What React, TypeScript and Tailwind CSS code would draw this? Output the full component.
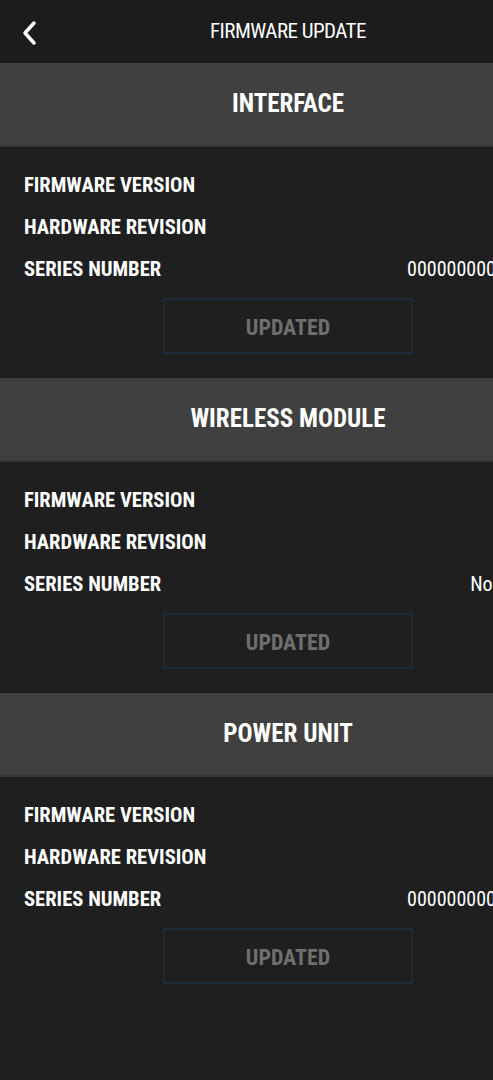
import React from 'react';

type Section = { title: string; serial: string };

const sections: Section[] = [
  { title: 'INTERFACE', serial: '0000000000000000' },
  { title: 'WIRELESS MODULE', serial: 'No modules' },
  { title: 'POWER UNIT', serial: '0000000000000000' },
];

const font = { fontFamily: '"Roboto Condensed", "Liberation Sans Narrow", "DejaVu Sans Condensed", Roboto, sans-serif' };

const Row = ({ label, value }: { label: string; value?: string }) => (
  <div className="flex items-center justify-between h-[42px] pl-6 pr-[11px]">
    <span className="text-[20.6px] font-bold text-white">{label}</span>
    {value && <span className="text-[20px] text-white">{value}</span>}
  </div>
);

export default function App() {
  return (
    <div className="w-[493px] h-[1080px] overflow-hidden bg-[#1f1f1f]" style={font}>
      <div className="w-[576px]">
        <div className="h-[63px] bg-[#1c1c1c] flex items-center relative">
          <svg className="absolute left-[20px] top-[20px]" width="18" height="26" viewBox="0 0 18 26" fill="none">
            <path d="M14 3 L5 13 L14 23" stroke="white" strokeWidth="3.5" strokeLinecap="round" strokeLinejoin="round" />
          </svg>
          <div className="flex-1 text-center text-white text-[21px] tracking-tight">FIRMWARE UPDATE</div>
        </div>

        {sections.map((s) => (
          <div key={s.title} className="h-[315px] flex flex-col">
            <div className="h-[84px] bg-[#404040] border-b-2 border-[#363636] flex items-center justify-center">
              <span className="text-white text-[25px] font-bold">{s.title}</span>
            </div>
            <div className="pt-[17px] flex flex-col">
              <Row label="FIRMWARE VERSION" />
              <Row label="HARDWARE REVISION" />
              <Row label="SERIES NUMBER" value={s.serial} />
              <div className="flex justify-center mt-[8px]">
                <div className="w-[250px] h-[56px] border-2 border-[#1d2a3a] flex items-center justify-center pt-[3px]">
                  <span className="text-[#6f6f6f] text-[22px] font-bold">UPDATED</span>
                </div>
              </div>
            </div>
          </div>
        ))}
      </div>
    </div>
  );
}
